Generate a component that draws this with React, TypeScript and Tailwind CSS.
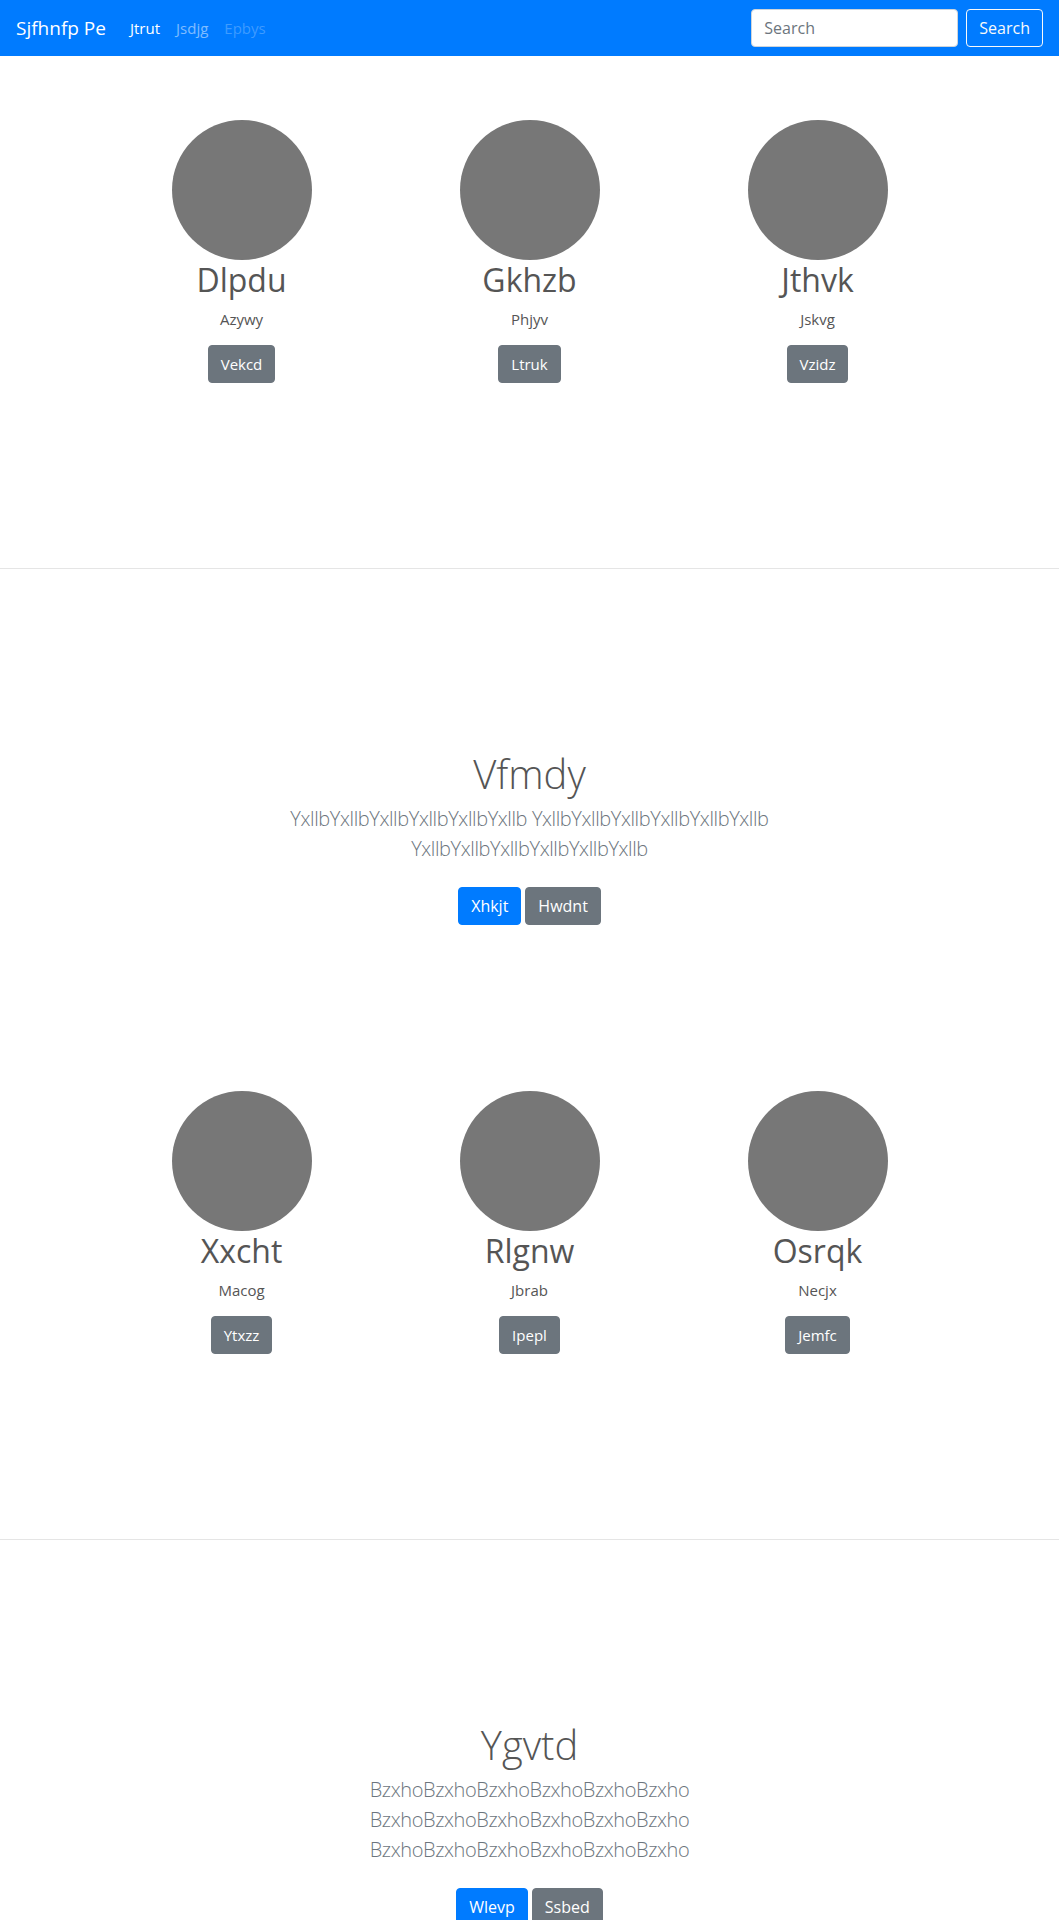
const font = { fontFamily: '"Segoe UI", "Open Sans", "Noto Sans", sans-serif' };

type Person = { name: string; role: string; action: string };

const rowOne: Person[] = [
  { name: 'Dlpdu', role: 'Azywy', action: 'Vekcd' },
  { name: 'Gkhzb', role: 'Phjyv', action: 'Ltruk' },
  { name: 'Jthvk', role: 'Jskvg', action: 'Vzidz' },
];

const rowTwo: Person[] = [
  { name: 'Xxcht', role: 'Macog', action: 'Ytxzz' },
  { name: 'Rlgnw', role: 'Jbrab', action: 'Ipepl' },
  { name: 'Osrqk', role: 'Necjx', action: 'Jemfc' },
];

function Navbar() {
  return (
    <nav className="flex h-14 items-center justify-between bg-[#007bff] px-4">
      <div className="flex items-center">
        <a className="mr-4 text-[19px] leading-[30px] text-white">Sjfhnfp Pe</a>
        <ul className="flex text-[15px] leading-6">
          <li><a className="block px-2 text-white">Jtrut</a></li>
          <li><a className="block px-2 text-white/50">Jsdjg</a></li>
          <li><a className="block px-2 text-white/25">Epbys</a></li>
        </ul>
      </div>
      <form className="flex items-center">
        <input
          placeholder="Search"
          className="mr-2 h-[38px] w-[207px] rounded border border-[#ced4da] bg-white px-3 text-[16px] text-[#495057] placeholder:text-[#6c757d]"
        />
        <button className="h-[38px] rounded border border-[#f8f9fa] px-3 text-[16px] text-[#f8f9fa]">Search</button>
      </form>
    </nav>
  );
}

function PeopleRow({ people }: { people: Person[] }) {
  return (
    <section className="h-[512px] pt-16">
      <div className="grid grid-cols-[288px_288px_288px] justify-center text-center">
        {people.map((p) => (
          <div key={p.name} className="flex flex-col items-center">
            <svg width="140" height="140" className="mb-[1px] block">
              <circle cx="70" cy="70" r="70" fill="#777" />
            </svg>
            <h2 className="mb-2 text-[32px] leading-[1.2] text-[#555]">{p.name}</h2>
            <p className="mb-[14px] text-[15px] leading-6 text-[#555]">{p.role}</p>
            <button className="rounded border border-[#6c757d] bg-[#6c757d] px-3 py-[6px] text-[15px] leading-6 text-white">
              {p.action}
            </button>
          </div>
        ))}
      </div>
    </section>
  );
}

function Jumbo({ title, words, primary, secondary }: { title: string; words: string[]; primary: string; secondary: string }) {
  return (
    <section className="h-[458px] pt-[181px] text-center">
      <div className="mx-auto w-[520px]">
        <h1 className="mb-[6px] text-[40px] font-light leading-[1.2] text-[#555]">{title}</h1>
        <p className="mb-[23px] text-[20px] font-light leading-[30px] tracking-[-0.02em] text-[#6c757d]">{words.join(' ')}</p>
        <div className="flex justify-center gap-1">
          <button className="rounded border border-[#007bff] bg-[#007bff] px-3 py-[6px] text-[16px] leading-6 text-white">{primary}</button>
          <button className="rounded border border-[#6c757d] bg-[#6c757d] px-3 py-[6px] text-[16px] leading-6 text-white">{secondary}</button>
        </div>
      </div>
    </section>
  );
}

export default function App() {
  const yx = 'YxllbYxllbYxllbYxllbYxllbYxllb';
  const bz = 'BzxhoBzxhoBzxhoBzxhoBzxhoBzxho';
  return (
    <div className="min-h-screen bg-white text-[#212529]" style={font}>
      <Navbar />
      <PeopleRow people={rowOne} />
      <hr className="border-t border-black/10" />
      <Jumbo title="Vfmdy" words={[yx, yx, yx]} primary="Xhkjt" secondary="Hwdnt" />
      <PeopleRow people={rowTwo} />
      <hr className="border-t border-black/10" />
      <Jumbo title="Ygvtd" words={[bz, bz, bz]} primary="Wlevp" secondary="Ssbed" />
    </div>
  );
}
